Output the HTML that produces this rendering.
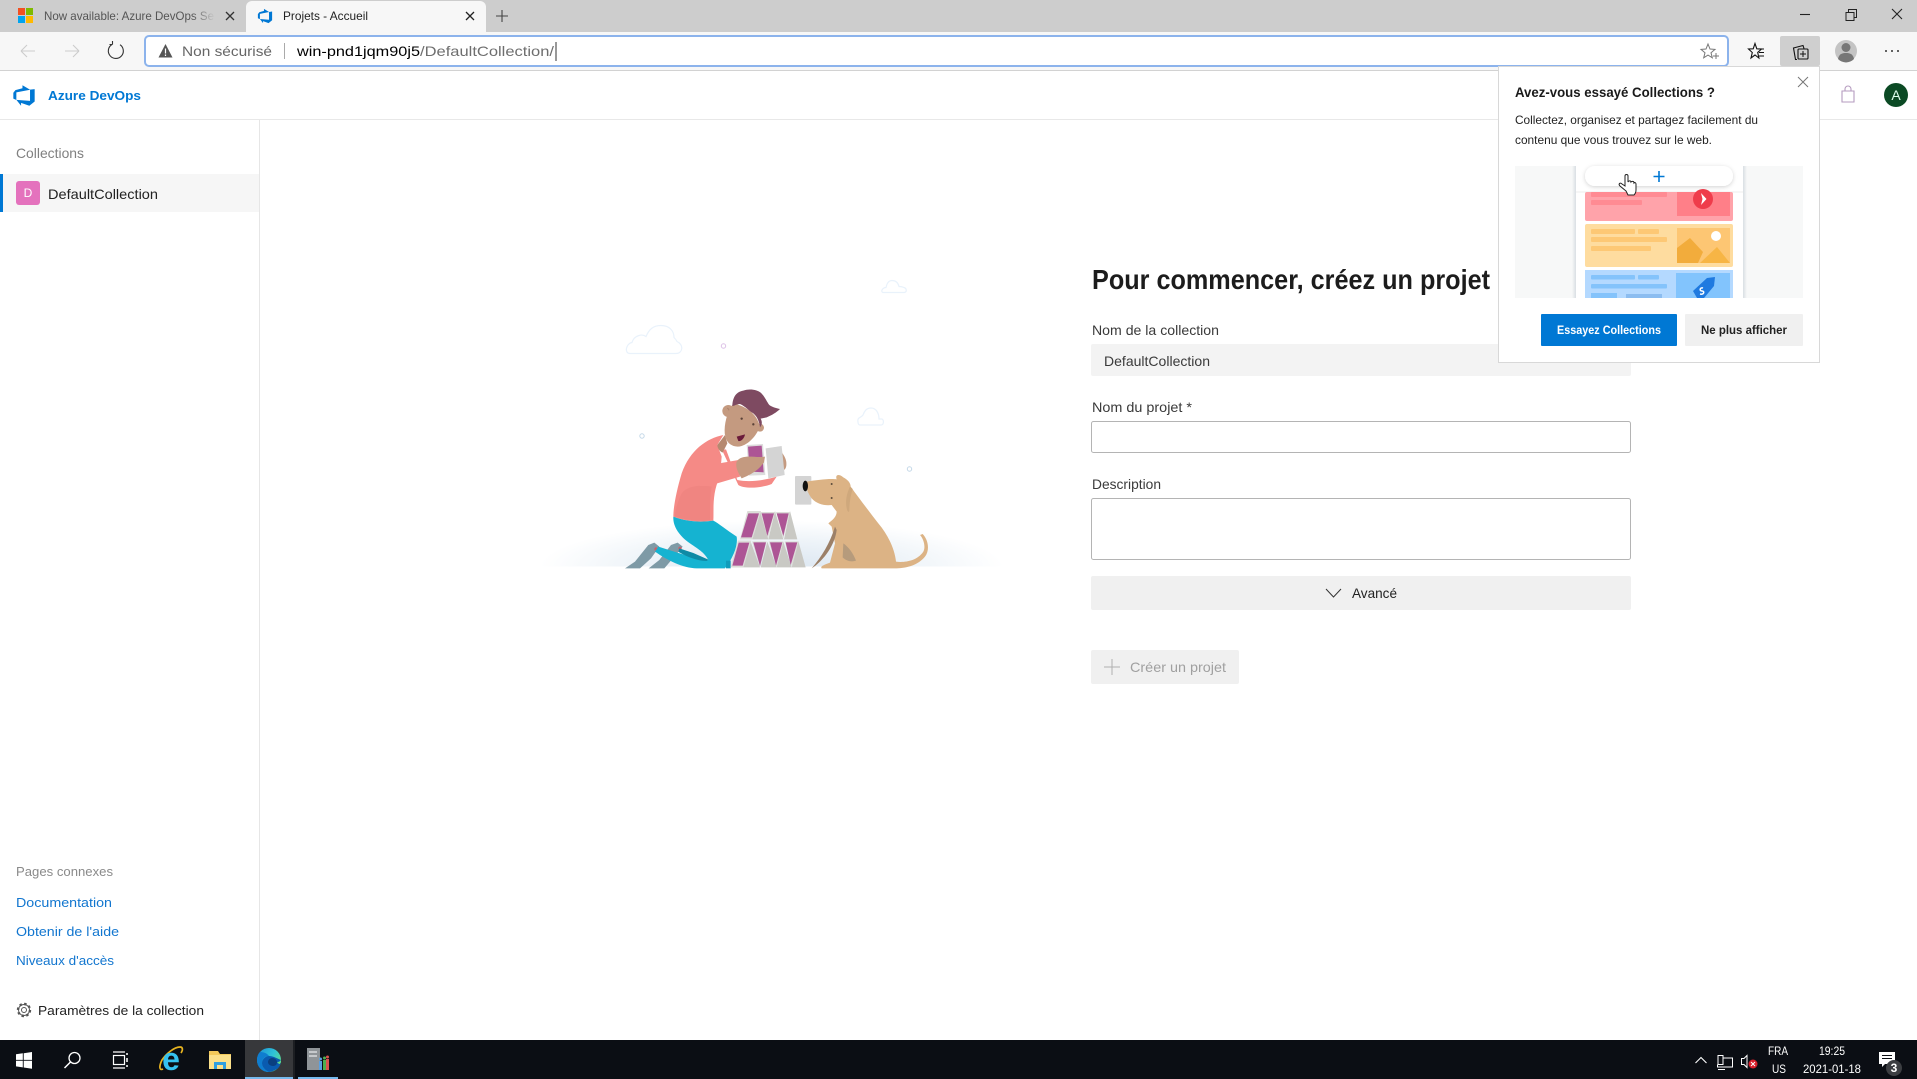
<!DOCTYPE html>
<html lang="fr"><head><meta charset="utf-8"><title>Projets - Accueil</title>
<style>
html,body{margin:0;padding:0;background:#fff;overflow:hidden}
svg{display:block}
text{font-family:"Liberation Sans",sans-serif;white-space:pre}
.s12{font-size:12px}.s13{font-size:13px}.s14{font-size:14px}
.b{font-weight:bold}
</style></head><body>
<svg xmlns="http://www.w3.org/2000/svg" width="1917" height="1079" viewBox="0 0 1917 1079">
<defs>
<linearGradient id="fade" gradientUnits="userSpaceOnUse" x1="192" x2="215" y1="0" y2="0"><stop offset="0" stop-color="#555"/><stop offset="1" stop-color="#ccc"/></linearGradient>
<radialGradient id="glow" gradientUnits="userSpaceOnUse" cx="772" cy="567" r="232" gradientTransform="translate(0 453.600) scale(1 .2)"><stop offset="0" stop-color="#dbe6f1"/><stop offset=".55" stop-color="#edf3f8"/><stop offset="1" stop-color="#fff"/></radialGradient>
<linearGradient id="edgeA" x1="0" y1="0" x2="1" y2=".6"><stop offset="0" stop-color="#1b8fd6"/><stop offset=".6" stop-color="#2ec2d8"/><stop offset="1" stop-color="#5fdc8a"/></linearGradient>
<linearGradient id="panelL" x1="0" x2="1" y1="0" y2="0"><stop offset="0" stop-color="#f7f8f8"/><stop offset="1" stop-color="#d9dfe3"/></linearGradient>
<linearGradient id="panelR" x1="0" x2="1" y1="0" y2="0"><stop offset="0" stop-color="#d9dfe3"/><stop offset="1" stop-color="#f7f8f8"/></linearGradient>
<filter id="sh" x="-10%" y="-30%" width="120%" height="170%"><feDropShadow dx="0" dy="1" stdDeviation="2" flood-color="#000" flood-opacity=".18"/></filter>
</defs>

<!-- tab strip -->
<rect width="1917" height="32" fill="#cdcdcd"/>
<rect x="18" y="8" width="7" height="7" fill="#f25022"/><rect x="26" y="8" width="7" height="7" fill="#7fba00"/>
<rect x="18" y="16" width="7" height="7" fill="#00a4ef"/><rect x="26" y="16" width="7" height="7" fill="#ffb900"/>
<text x="44" y="20" class="s12" fill="url(#fade)" textLength="170" lengthAdjust="spacingAndGlyphs">Now available: Azure DevOps Se</text>
<path d="M226 12l8 8M234 12l-8 8" stroke="#333" stroke-width="1.300"/>
<path d="M246 32V7a6 6 0 0 1 6-6h228a6 6 0 0 1 6 6v25z" fill="#f7f7f7"/>
<svg x="257" y="8" width="16" height="16" viewBox="0 0 18 18"><path fill="#0078d4" d="M17 4v9.740l-4 3.280-6.200-2.260V17l-3.510-4.590 10.230.8V4.440zm-3.410.49L7.850 1v2.290L2.580 4.840 1 6.870v4.610l2.260 1V6.570z"/></svg>
<text x="283" y="20" class="s12" fill="#222" textLength="85" lengthAdjust="spacingAndGlyphs">Projets - Accueil</text>
<path d="M466 12l8 8M474 12l-8 8" stroke="#222" stroke-width="1.300"/>
<path d="M496 16h12M502 10v12" stroke="#444" stroke-width="1.100"/>
<path d="M1800 14.500h10" stroke="#222" stroke-width="1.100"/>
<path d="M1846 12.500h8v8h-8zM1848.500 12.500v-3h8v8h-2.500" fill="none" stroke="#222" stroke-width="1"/>
<path d="M1892 9l10 10M1902 9l-10 10" stroke="#222" stroke-width="1.100"/>

<!-- toolbar -->
<rect y="32" width="1917" height="38" fill="#f7f7f7"/>
<rect y="70" width="1917" height="1" fill="#d2d2d2"/>
<path d="M21 51h14M21 51l6-6M21 51l6 6" fill="none" stroke="#cccccc" stroke-width="1.100"/>
<path d="M79 51H65M79 51l-6-6M79 51l-6 6" fill="none" stroke="#cccccc" stroke-width="1.100"/>
<path d="M112 44.500a7.500 7.500 0 1 0 8 .2M112.500 44.500h-3M112.500 44.500v-3.500" fill="none" stroke="#333" stroke-width="1.100"/>
<rect x="145" y="36" width="1583" height="30" rx="4" fill="#fff" stroke="#8cb3ec" stroke-width="2"/>
<path d="M165.500 44l7 13.500h-14z" fill="#555"/><path d="M165.500 48.500v5M165.500 54.500v1.500" stroke="#fff" stroke-width="1.200"/>
<text x="182" y="56" class="s14" fill="#666" textLength="90" lengthAdjust="spacingAndGlyphs">Non sécurisé</text>
<rect x="284" y="43" width="1" height="16" fill="#aaa"/>
<text x="297" y="56" class="s14" fill="#000" textLength="123" lengthAdjust="spacingAndGlyphs">win-pnd1jqm90j5</text>
<text x="420" y="56" class="s14" fill="#6e6e6e" textLength="134" lengthAdjust="spacingAndGlyphs">/DefaultCollection/</text>
<rect x="555.500" y="42" width="1" height="19" fill="#333"/>
<path d="M1708 44l2 5 5 .4-4 3.400 1.300 5-4.300-2.700-4.300 2.700 1.300-5-4-3.400 5-.4z" fill="none" stroke="#777" stroke-width="1"/>
<path d="M1713 56h6M1716 53v6" stroke="#777" stroke-width="1"/>
<path d="M1755 43.500l1.800 5.300 4.700.2-3.800 3.500 1.200 5.500-3.900-3-4 3 1.300-5.500-3.800-3.500 4.700-.2z" fill="none" stroke="#111" stroke-width="1.100"/>
<path d="M1758 49h6M1759 52.500h5M1759 56h5" stroke="#111" stroke-width="1"/>
<rect x="1780" y="36" width="40" height="30" rx="2" fill="#cfcfcf"/>
<path d="M1797 59.500h-1.500L1793.500 48l9.500-2.500 1 3" fill="none" stroke="#111" stroke-width="1.100"/>
<rect x="1798" y="49" width="10" height="10" rx="1" fill="none" stroke="#111" stroke-width="1.100"/>
<path d="M1803 51v6M1800 54h6" stroke="#111" stroke-width="1"/>
<circle cx="1846" cy="51" r="11" fill="#c4c4c4"/><circle cx="1846" cy="47.500" r="4.500" fill="#777"/><path d="M1838 59c1-5 4-6 8-6s7 1 8 6a11 11 0 0 1-16 0z" fill="#777"/>
<circle cx="1886" cy="51" r="1" fill="#333"/><circle cx="1892" cy="51" r="1" fill="#333"/><circle cx="1898" cy="51" r="1" fill="#333"/>

<!-- app header -->
<rect y="119" width="1917" height="1" fill="#e8e8e8"/>
<svg x="12" y="84" width="24" height="23" viewBox="0 0 18 18" preserveAspectRatio="none"><path fill="#0078d4" d="M17 4v9.740l-4 3.280-6.200-2.260V17l-3.510-4.590 10.230.8V4.440zm-3.410.49L7.850 1v2.290L2.580 4.840 1 6.870v4.610l2.260 1V6.570z"/></svg>
<text x="48" y="100" class="s13 b" fill="#0078d4" textLength="93" lengthAdjust="spacingAndGlyphs">Azure DevOps</text>
<path d="M1842 91h12v11h-12zM1845 91v-2a3 3 0 0 1 6 0v2" fill="none" stroke="#b59bbf" stroke-width="1.100"/>
<circle cx="1896" cy="95" r="12" fill="#0b4a24"/>
<text x="1896" y="100" class="s14" fill="#dfe" text-anchor="middle">A</text>

<!-- sidebar -->
<rect x="259" y="120" width="1" height="920" fill="#e6e6e6"/>
<text x="16" y="158" class="s14" fill="#808080" textLength="68" lengthAdjust="spacingAndGlyphs">Collections</text>
<rect y="174" width="259" height="38" fill="#f6f6f6"/>
<rect y="174" width="3" height="38" fill="#0078d4"/>
<rect x="16" y="181" width="24" height="24" rx="3" fill="#e472bd"/>
<text x="28" y="197" class="s12" fill="#fff" text-anchor="middle">D</text>
<text x="48" y="199" class="s14" fill="#222" textLength="110" lengthAdjust="spacingAndGlyphs">DefaultCollection</text>
<text x="16" y="876" class="s13" fill="#8a8a8a" textLength="97" lengthAdjust="spacingAndGlyphs">Pages connexes</text>
<text x="16" y="907" class="s13" fill="#1276cf" textLength="96" lengthAdjust="spacingAndGlyphs">Documentation</text>
<text x="16" y="936" class="s13" fill="#1276cf" textLength="103" lengthAdjust="spacingAndGlyphs">Obtenir de l'aide</text>
<text x="16" y="965" class="s13" fill="#1276cf" textLength="98" lengthAdjust="spacingAndGlyphs">Niveaux d'accès</text>
<circle cx="24" cy="1010" r="6" fill="none" stroke="#555" stroke-width="2.400" stroke-dasharray="2.400 2.300"/>
<circle cx="24" cy="1010" r="5.500" fill="none" stroke="#555" stroke-width=".9"/>
<circle cx="24" cy="1010" r="2.500" fill="none" stroke="#555" stroke-width="1"/>
<text x="38" y="1015" class="s13" fill="#222" textLength="166" lengthAdjust="spacingAndGlyphs">Paramètres de la collection</text>

<!-- illustration -->
<path d="M540 567V518H1004V567z" fill="url(#glow)"/>
<rect x="530" y="566.500" width="490" height="8" fill="#fff"/>
<g fill="none" stroke="#e9f2fb" stroke-width="1.200">
<path d="M630 353.500h46c7 0 8-9 1-12-1-2-2-3-3-4 0-7-5-12-13-12-8 0-12 4-15 11-4-3-12-1-14 6-6 1-8 11-2 11z"/>
<path d="M883 292.500h21c3 0 3-4 0-5-2-1-3-1-5-1-1-4-3-6-7-6-3 0-5 2-6 7-3 0-6 4-3 5z"/>
<path d="M860 425h21c3 0 3-5 1-6h-3c0-6-3-11-8-11-4 0-6 2-8 7-2 3-6 2-5 7 0 2 1 3 2 3z"/>
</g>
<circle cx="723.500" cy="346" r="2.200" fill="none" stroke="#dcc0e6" stroke-width="1"/>
<circle cx="642" cy="436" r="2.200" fill="none" stroke="#c4d8e8" stroke-width="1"/>
<circle cx="909.500" cy="469" r="2.200" fill="none" stroke="#c4d8e8" stroke-width="1"/>
<g transform="translate(640 380) scale(.33333)">
 <!-- shoes -->
 <path d="M-45 565l30-20 40-50 18-7 15 12-25 35-33 30z" fill="#7e9aa6"/>
 <path d="M26 565l32-25 35-45 20-7 15 12-25 30-30 35z" fill="#7e9aa6"/>
 <circle cx="48" cy="507" r="5" fill="#c8606a"/><circle cx="120" cy="505" r="5" fill="#c8606a"/>
 <!-- back arm -->
 <path d="M246 210l12-2 34 92c40 8 85 0 118-10l-15 22c-35 14-85 14-100 3z" fill="#f58a86"/>
 <!-- skin behind card -->
 <path d="M405 205l10-3c12 18 27 33 24 55-2 14-10 16-17 12z" fill="#c49a80"/>
 <!-- torso -->
 <path d="M250 165c-50 10-100 45-125 115-15 50-25 100-25 130 40 15 80 18 120 12 2-32-5-82 20-132l5-60-13-35z" fill="#f58a86"/>
 <path d="M125 340c20-25 60-25 90-20-5 30-5 70-5 100-30 5-70 0-105-10 0-20 10-50 20-70z" fill="#ec7f7c" opacity=".45"/>
 <path d="M255 165l-23 30c0 10 8 20 16 23l14-28z" fill="#b58970"/>
 <!-- pants -->
 <path d="M100 410c-2 30 20 60 50 80 30 20 45 30 55 50l-55-10-95-30-10 15c35 25 85 50 125 50h85c20-25 40-65 35-95-30-20-55-40-70-48-40 6-80 3-120-12z" fill="#15b3d1"/>
 <path d="M118 505l42 14 45 20-5 4c-30 0-65-15-85-28z" fill="#0f8aa5"/>
 <path d="M258 542h14v23h-14z" fill="#0f9cbb"/>
 <!-- head -->
 <circle cx="265" cy="93" r="18" fill="#c49a80"/><path d="M262 84c6 4 8 12 5 20" stroke="#a87f68" stroke-width="3" fill="none"/>
 <circle cx="360" cy="143" r="12" fill="#c49a80"/>
 <path d="M280 70c40 10 70 30 80 70-10 25-30 50-55 58-20 6-43-3-49-28-6-25 2-60 14-85z" fill="#c49a80"/>
 <path d="M277 78c1-28 13-43 33-46 20-7 42-2 52 6 13 12 18 27 26 37 10 7 22 10 32 12-10 10-25 19-40 25l-18 4c4 8 6 16-2 26-2-17-8-32-20-42-15-8-22-20-40-28-10 0-17 6-23 6z" fill="#7e4a61"/>
 <circle cx="305" cy="116" r="3.500" fill="#5a4238"/><circle cx="340" cy="133" r="3.500" fill="#5a4238"/>
 <path d="M290 170l25-7c-2 12-12 22-20 20z" fill="#6a1b3a"/>
 <!-- cards held -->
 <path d="M320 195l49-3 7 93-49 2z" fill="#dcdcdc"/>
 <path d="M324 200l41-3 6 80-42-2z" fill="#ad5595"/>
 <!-- arm front -->
 <path d="M140 290c5-25 30-28 50-28 40-12 80-17 105-22l5 50-85 25c-35 10-75-5-75-25z" fill="#f58a86"/>
 <path d="M290 245c15-25 55-10 85-15l-3 17c-7 8-17 28-67 48-10-15-20-35-15-50z" fill="#c49a80"/>
 <path d="M377 205l48-7 9 87-49 10z" fill="#d4d4d4"/>
 <!-- card house -->
 <g fill="#c9c9c4">
  <path d="M337 478l25-85 23 85zM385 478l20-85 25 85zM432 478l18-85 22 85z"/>
  <path d="M277 562l23-78h8l2 78zM310 562l22-77 28 77zM362 562l20-77 28 77zM410 562l20-77 25 77zM455 562l20-79 22 79z"/>
  <path d="M300 478l22-85h40l-25 85zM360 396h44l-20 80zM408 396h42l-20 80z" fill="#dcdcd8"/>
  <path d="M272 562l22-80h40l-24 80zM336 484h44l-20 78zM386 484h44l-20 78zM434 484h42l-20 76z" fill="#dcdcd8"/>
 </g>
 <g fill="#ad5595">
  <path d="M303 472l22-72h32l-22 72zM365 400h37l-20 68zM410 400h36l-16 68z"/>
  <path d="M277 557l19-69h32l-20 69zM340 487h38l-18 71zM390 487h37l-19 70zM437 487h35l-20 68z"/>
 </g>
 <!-- dog -->
 <rect x="465" y="288" width="49" height="86" rx="3" fill="#d4d4d4"/>
 <path d="M500 305c30-5 70-10 90-7-5-13 5-18 20-6 15 8 22 18 22 28 18 25 48 65 83 110 30 35 50 80 53 115 22 3 62 0 82-30 8-15 0-40-10-50l8-3c17 18 22 48 7 68-20 25-55 35-85 35H545c-5-5 5-10 25-17l15-58-10-50-10-10c13-10 25-20 25-35l-15-20c-20 3-45-3-60-20-10-15-17-25-15-50z" fill="#dcb385"/>
 <path d="M585 440l5 10c-5 40-30 80-65 108l-10 7c30-35 55-75 70-125z" fill="#9c8068"/>
 <path d="M610 490c15 10 30 30 38 52-15 5-30 0-40-10z" fill="#b69b7c"/>
 <path d="M630 320c-12 25-15 50-8 72 3 5 5 5 6 0 0-25 5-50 10-65z" fill="#cfa87c"/>
 <ellipse cx="496" cy="318" rx="8" ry="16" fill="#111"/>
 <circle cx="575" cy="312" r="3" fill="#5a4a3a"/><circle cx="575" cy="354" r="3" fill="#5a4a3a"/>
</g>

<!-- form -->
<text x="1092" y="289" font-size="28" class="b" fill="#1c1c1c" textLength="398" lengthAdjust="spacingAndGlyphs">Pour commencer, créez un projet</text>
<text x="1092" y="335" class="s14" fill="#3a3a3a" textLength="127" lengthAdjust="spacingAndGlyphs">Nom de la collection</text>
<rect x="1091" y="344" width="540" height="32" rx="2" fill="#f3f3f3"/>
<text x="1104" y="366" class="s14" fill="#3a3a3a" textLength="106" lengthAdjust="spacingAndGlyphs">DefaultCollection</text>
<text x="1092" y="412" class="s14" fill="#3a3a3a" textLength="100" lengthAdjust="spacingAndGlyphs">Nom du projet *</text>
<rect x="1091.500" y="421.500" width="539" height="31" rx="2" fill="#fff" stroke="#b4b4b4"/>
<text x="1092" y="489" class="s14" fill="#3a3a3a" textLength="69" lengthAdjust="spacingAndGlyphs">Description</text>
<rect x="1091.500" y="498.500" width="539" height="61" rx="2" fill="#fff" stroke="#b4b4b4"/>
<rect x="1091" y="576" width="540" height="34" rx="2" fill="#f0f0f0"/>
<path d="M1326 589l7.500 8 7.500-8" fill="none" stroke="#333" stroke-width="1"/>
<text x="1352" y="598" class="s14" fill="#222" textLength="45" lengthAdjust="spacingAndGlyphs">Avancé</text>
<rect x="1091" y="650" width="148" height="34" rx="2" fill="#f0f0f0"/>
<path d="M1104 667h16M1112 659v16" stroke="#b0b0b0" stroke-width="1"/>
<text x="1130" y="672" class="s14" fill="#a0a0a0" textLength="96" lengthAdjust="spacingAndGlyphs">Créer un projet</text>

<!-- popup -->
<rect x="1498.500" y="66.500" width="321" height="296" fill="#fff" stroke="#d8d8d8"/>
<path d="M1798 77l10 10M1808 77l-10 10" stroke="#777" stroke-width="1"/>
<text x="1515" y="97" class="s14 b" fill="#1a1a1a" textLength="200" lengthAdjust="spacingAndGlyphs">Avez-vous essayé Collections ?</text>
<text x="1515" y="124" class="s12" fill="#222" textLength="243" lengthAdjust="spacingAndGlyphs">Collectez, organisez et partagez facilement du</text>
<text x="1515" y="144" class="s12" fill="#222" textLength="197" lengthAdjust="spacingAndGlyphs">contenu que vous trouvez sur le web.</text>
<!-- popup art -->
<rect x="1515" y="166" width="288" height="132" fill="#f7f8f8"/>
<rect x="1572" y="166" width="4" height="132" fill="url(#panelL)"/>
<rect x="1743" y="166" width="4" height="132" fill="url(#panelR)"/>
<rect x="1576" y="166" width="167" height="132" fill="#fff"/>
<rect x="1576" y="191.500" width="167" height="1" fill="#eeeeee"/>
<rect x="1585" y="192" width="148" height="29" rx="2" fill="#ffa3aa"/>
<rect x="1677" y="192" width="53" height="24" fill="#ff7f88"/>
<rect x="1591" y="192" width="76" height="5" rx="1" fill="#ff8b93"/>
<rect x="1591" y="200" width="51" height="5" rx="1" fill="#ff8b93"/>
<circle cx="1703" cy="199" r="10" fill="#ef3c4b"/>
<path d="M1701 193l5.500 6-5.500 6 1.500-6z" fill="#fff"/>
<rect x="1585" y="224" width="148" height="43" rx="2" fill="#fedc9f"/>
<rect x="1591" y="229" width="44" height="5" rx="1" fill="#fdc875"/><rect x="1638" y="229" width="21" height="5" rx="1" fill="#fdc875"/>
<rect x="1591" y="237" width="76" height="5" rx="1" fill="#fdc875"/>
<rect x="1591" y="246" width="60" height="5" rx="1" fill="#fdc875"/>
<rect x="1677" y="228" width="53" height="35" fill="#fdc673"/>
<path d="M1677 263v-15l13-10 13 14-5 11z" fill="#f2ac3c"/>
<path d="M1700 263l17-16 13 16z" fill="#f7b545"/>
<circle cx="1716" cy="236" r="5" fill="#fff"/>
<rect x="1585" y="270" width="148" height="28" fill="#b4d9ff"/>
<rect x="1591" y="275" width="44" height="4.500" rx="1" fill="#84c3fb"/><rect x="1638" y="275" width="21" height="4.500" rx="1" fill="#84c3fb"/>
<rect x="1591" y="284" width="76" height="4.500" rx="1" fill="#84c3fb"/>
<rect x="1591" y="293" width="26" height="5" fill="#84c3fb"/>
<rect x="1626" y="294" width="36" height="4" fill="#8cbdf0"/>
<rect x="1676" y="273" width="54" height="25" fill="#82c4fd"/>
<path d="M1693 291l14-13 8-1-1 9-10 12h-7z" fill="#1f7ae0"/>
<path d="M1703 288c-3-1-4 3-1 3s2 4-2 3" stroke="#fff" stroke-width="1.500" fill="none"/>
<rect x="1585" y="166" width="148" height="20" rx="10" fill="#fff" filter="url(#sh)"/>
<path d="M1659 171v11M1653.500 176.500h11" stroke="#0078d4" stroke-width="1.600"/>
<path d="M1626 191l-6-5c-2-2 0-4 2-2l3 2v-10c0-2 3-2 3 0v6c1-2 3-1 3 0 1-1 3-1 3 1 1-1 2 0 2 1v6c0 3-1 4-2 5h-6z" fill="#fff" stroke="#222" stroke-width="1"/>
<rect x="1541" y="314" width="136" height="32" rx="1" fill="#0078d4"/>
<text x="1557" y="334" class="s12 b" fill="#fff" textLength="104" lengthAdjust="spacingAndGlyphs">Essayez Collections</text>
<rect x="1685" y="314" width="118" height="32" rx="1" fill="#f0f0f0"/>
<text x="1701" y="334" class="s12 b" fill="#222" textLength="86" lengthAdjust="spacingAndGlyphs">Ne plus afficher</text>

<!-- taskbar -->
<rect y="1040" width="1917" height="39" fill="#0b0e14"/>
<path d="M16 1054.300l6.800-1v6.600H16zM23.700 1053.200l8.300-1.200v7.900h-8.300zM16 1060.800h6.800v6.600l-6.800-1zM23.700 1060.800H32v7.900l-8.300-1.200z" fill="#fff"/>
<circle cx="74.500" cy="1058" r="5.500" fill="none" stroke="#fff" stroke-width="1.300"/><path d="M70.500 1062l-6 6" stroke="#fff" stroke-width="1.500"/>
<path d="M113 1052h12M113 1068h12" stroke="#fff" stroke-width="1.200"/><rect x="113.500" y="1055.500" width="11" height="9" fill="none" stroke="#fff" stroke-width="1.200"/><path d="M127 1053v2M127 1058v4M127 1065v2" stroke="#fff" stroke-width="1.500"/>
<path d="M163 1069c-4 2-4-3-1-9 4-6 12-13 18-13 3 0 3 3 1 6" fill="none" stroke="#e8b420" stroke-width="1.700"/>
<text x="171" y="1070" font-size="32" class="b" fill="#35c2f0" text-anchor="middle">e</text>
<path d="M209 1051h9l2 3h11v15h-22z" fill="#f3c95a"/><rect x="209" y="1055" width="22" height="14" fill="#fbe08a"/><path d="M214 1069v-7h12v7h-3v-4h-6v4z" fill="#2f9fe0"/>
<rect x="245" y="1040" width="48" height="39" fill="#37383b"/>
<rect x="245" y="1077" width="48" height="2" fill="#76b9ed"/>
<circle cx="269" cy="1060" r="12" fill="url(#edgeA)"/>
<path d="M257 1060c0-3 1-6 3-8 3 0 7 1 9 4-4 0-7 3-7 7 0 4 3 7 7 9-7 0-12-5-12-12z" fill="#0f7dcf"/>
<path d="M262 1063c0-4 4-7 7-7 4 0 7 2 12 4 0 3-1 7-4 9-2 1-5 3-8 3-4-2-7-5-7-9z" fill="#0a5bb0"/>
<path d="M268 1062c0-2 2-4 4-4 3 0 5 2 5 4 0 3-2 4-4 4-3 0-5-2-5-4z" fill="#0a3f80"/>
<path d="M277 1062c2 0 4-1 4-3l0 2c0 2-1 3-2 3z" fill="#5fdc8a"/>
<rect x="293" y="1040" width="2" height="39" fill="#1c1e22"/>
<rect x="298" y="1077" width="40" height="2" fill="#76b9ed"/>
<rect x="307" y="1048" width="13" height="22" fill="#8f9498"/><rect x="309" y="1051" width="8" height="2" fill="#c6c9cc"/><rect x="309" y="1055" width="8" height="2" fill="#c6c9cc"/>
<rect x="319" y="1061" width="3" height="9" fill="#5aa0e0"/><rect x="323" y="1060" width="3" height="10" fill="#4caf50"/><rect x="326" y="1059" width="3" height="11" fill="#d9534f"/>
<circle cx="320.500" cy="1059" r="1.500" fill="#5aa0e0"/><circle cx="324.500" cy="1058" r="1.500" fill="#4caf50"/><circle cx="327.500" cy="1057" r="1.500" fill="#d9534f"/>
<path d="M1695.500 1063l5.500-5.500 5.500 5.500" fill="none" stroke="#fff" stroke-width="1.100"/>
<path d="M1718 1055.500h5v9h-5zM1723 1058h9.500v9h-15v-2.500M1725 1069.500h-7" fill="none" stroke="#fff" stroke-width="1"/>
<path d="M1741.500 1058.500h2.500l3-3v12l-3-3h-2.500z" fill="none" stroke="#fff" stroke-width="1"/>
<circle cx="1753" cy="1064" r="4.500" fill="#d9202c"/><path d="M1751 1062l4 4M1755 1062l-4 4" stroke="#fff" stroke-width="1"/>
<text x="1768" y="1055" class="s12" fill="#fff" textLength="20" lengthAdjust="spacingAndGlyphs">FRA</text>
<text x="1772" y="1073" class="s12" fill="#fff" textLength="14" lengthAdjust="spacingAndGlyphs">US</text>
<text x="1819" y="1055" class="s12" fill="#fff" textLength="26" lengthAdjust="spacingAndGlyphs">19:25</text>
<text x="1803" y="1073" class="s12" fill="#fff" textLength="58" lengthAdjust="spacingAndGlyphs">2021-01-18</text>
<path d="M1879 1052h16v12h-10l-3 3v-3h-3z" fill="#fff"/>
<path d="M1882 1055.500h10M1882 1058.500h10" stroke="#0b0e14" stroke-width="1"/>
<circle cx="1894" cy="1068" r="8" fill="#3c3e42"/>
<text x="1894" y="1072" class="s12 b" fill="#fff" text-anchor="middle">3</text>
</svg>
</body></html>
